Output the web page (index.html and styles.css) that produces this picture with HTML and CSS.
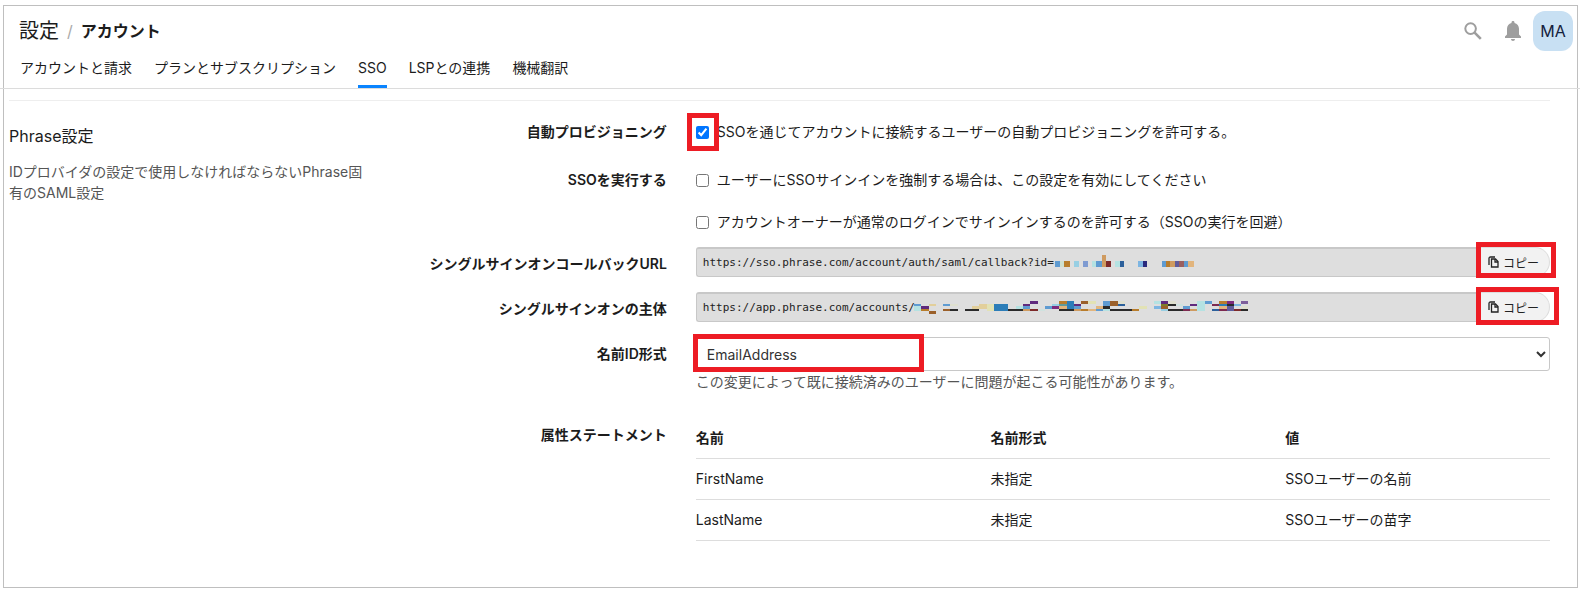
FILE: index.html
```
<!DOCTYPE html>
<html lang="ja">
<head>
  <meta charset="UTF-8" />
  <meta name="viewport" content="width=device-width, initial-scale=1.0" />
  <title>設定 / アカウント - SSO</title>
  <link rel="stylesheet" href="styles.css">
</head>
<body>
  <div class="frame">
    <header class="topbar">
      <h1 class="breadcrumb">
        <a href="#">設定</a>
        <span class="slash">/</span>
        <strong>アカウント</strong>
      </h1>
      <div class="tools">
        <button class="icon-btn" type="button" aria-label="検索">
          <svg width="18" height="18" viewBox="0 0 18 18" fill="none" stroke="#9e9e9e">
            <circle cx="6.6" cy="6.6" r="5.3" stroke-width="2" />
            <path d="M10.6 10.6L16.8 16.8" stroke-width="2.6" />
          </svg>
        </button>
        <button class="icon-btn" type="button" aria-label="通知">
          <svg width="16" height="20" viewBox="0 0 16 20" fill="#9e9e9e">
            <path d="M8 0c.9 0 1.5.6 1.5 1.4v.5C12.200 2.600 14 4.900 14 7.700V13.500l2 2V17H0v-1.500l2-2V7.700C2 4.900 3.800 2.600 6.500 1.900v-.5C6.500.6 7.100 0 8 0z" />
            <path d="M6 18h4c0 1.100-.9 2-2 2s-2-.9-2-2z" />
          </svg>
        </button>
        <button class="avatar" type="button">MA</button>
      </div>
    </header>

    <nav class="tabs">
      <a href="#">アカウントと請求</a>
      <a href="#">プランとサブスクリプション</a>
      <a href="#" class="active">SSO</a>
      <a href="#">LSPとの連携</a>
      <a href="#">機械翻訳</a>
    </nav>

    <main class="section">
      <div class="intro">
        <h2>Phrase設定</h2>
        <p>IDプロバイダの設定で使用しなければならないPhrase固有のSAML設定</p>
      </div>

      <form class="form">
        <div class="row">
          <label class="name" for="provision">自動プロビジョニング</label>
          <div class="field checks">
            <label class="check">
              <span class="marked">
                <input type="checkbox" id="provision" checked>
                <span class="mark mark-check"></span>
              </span>
              SSOを通じてアカウントに接続するユーザーの自動プロビジョニングを許可する。
            </label>
          </div>
        </div>

        <div class="row">
          <label class="name" for="enforce">SSOを実行する</label>
          <div class="field checks">
            <label class="check"><input type="checkbox" id="enforce">ユーザーにSSOサインインを強制する場合は、この設定を有効にしてください</label>
            <label class="check"><input type="checkbox">アカウントオーナーが通常のログインでサインインするのを許可する（SSOの実行を回避）</label>
          </div>
        </div>

        <div class="row row-input">
          <label class="name" for="callback">シングルサインオンコールバックURL</label>
          <div class="field copy-group">
            <input type="text" id="callback" readonly value="https://sso.phrase.com/account/auth/saml/callback?id=">
            <!-- 伏せた ID -->
            <svg class="mosaic mosaic-id" width="139" height="12" viewBox="165 60 417 36" shape-rendering="crispEdges">
              <path fill="#5f9bd1" d="M165 78h15v18h-15zM288 78h18v18h-18zM486 78h12v18h-12zM552 78h12v18h-12z" />
              <path fill="#cfe0cf" d="M180 78h12v18h-12z" />
              <path fill="#b87d2c" d="M192 78h18v18h-18zM498 78h12v18h-12z" />
              <path fill="#98cfe3" d="M222 78h15v18h-15z" />
              <path fill="#7f9bd1" d="M249 78h15v18h-15z" />
              <path fill="#b5e2e2" d="M276 78h12v18h-12zM345 78h15v18h-15z" />
              <path fill="#cf9b60" d="M306 60h12v36h-12zM510 78h15v18h-15z" />
              <path fill="#7d2a2a" d="M318 78h15v18h-15z" />
              <path fill="#2c609b" d="M360 78h12v18h-12z" />
              <path fill="#7db5e2" d="M414 78h15v18h-15z" />
              <path fill="#2a2a7d" d="M429 78h12v18h-12z" />
              <path fill="#605c9b" d="M525 78h12v18h-12z" />
              <path fill="#9b6060" d="M537 78h15v18h-15z" />
              <path fill="#e2b57d" d="M564 78h18v18h-18z" />
            </svg>
            <button class="copy" type="button">
              <svg width="11" height="12" viewBox="0 0 11 12" fill="none" stroke="#222">
                <path d="M1 9V2.500Q1 1 2.500 1H7" stroke-width="1.300" />
                <path d="M3.500 3h4L10 5.500V11H3.500z" stroke-width="1.300" />
                <path d="M7 3v3h3" stroke-width="1.300" />
              </svg>
              コピー
            </button>
            <span class="mark mark-copy"></span>
          </div>
        </div>

        <div class="row row-input">
          <label class="name" for="entity">シングルサインオンの主体</label>
          <div class="field copy-group">
            <input type="text" id="entity" readonly value="https://app.phrase.com/accounts/">
            <!-- 伏せたアカウント名 -->
            <svg class="mosaic mosaic-account" width="334" height="13" viewBox="-258 198 1002 39" shape-rendering="crispEdges">
              <path fill="#5f9bd1" d="M-258 207h21v6h-21zM-171 207h21v6h-21zM69 213h21v9h-21zM135 213h21v9h-21zM222 213h21v9h-21zM288 222h21v6h-21zM309 198h21v15h-21zM549 213h21v9h-21zM615 198h21v9h-21z" />
              <path fill="#b5e2e2" d="M-258 213h21v15h-21zM48 213h21v9h-21zM309 222h21v6h-21zM462 198h21v9h-21zM591 198h24v30h-24z" />
              <path fill="#98cfe3" d="M156 207h21v6h-21zM483 222h21v6h-21z" />
              <path fill="#7db5e2" d="M462 213h21v9h-21zM702 207h21v6h-21z" />
              <path fill="#2c7db8" d="M-18 207h42v21h-42zM201 198h21v24h-21zM657 207h24v6h-24z" />
              <path fill="#2c609b" d="M354 207h21v6h-21zM636 222h21v6h-21z" />
              <path fill="#602a7d" d="M-237 213h24v9h-24zM69 207h21v6h-21zM90 198h24v9h-24zM222 207h21v6h-21zM483 198h21v9h-21zM570 207h21v6h-21z" />
              <path fill="#7d2a7d" d="M156 213h21v9h-21zM681 198h21v9h-21z" />
              <path fill="#7d2a50" d="M549 222h21v6h-21zM636 207h21v6h-21zM657 222h24v6h-24z" />
              <path fill="#7d2a2a" d="M90 222h24v6h-24zM702 222h21v6h-21z" />
              <path fill="#605c9b" d="M681 213h21v15h-21z" />
              <path fill="#7d609b" d="M723 198h21v9h-21z" />
              <path fill="#b87d2c" d="M-237 222h24v6h-24zM177 198h24v9h-24zM243 222h21v6h-21zM396 222h21v6h-21zM657 198h24v9h-24z" />
              <path fill="#9b602a" d="M-213 228h21v9h-21zM-171 222h21v6h-21zM243 198h21v9h-21zM330 198h24v15h-24zM483 213h21v9h-21z" />
              <path fill="#7d7d2a" d="M483 207h21v6h-21z" />
              <path fill="#cf9b60" d="M69 222h21v6h-21zM222 222h21v6h-21zM570 222h21v6h-21z" />
              <path fill="#e2b57d" d="M177 213h24v9h-24zM264 222h24v6h-24zM288 213h21v9h-21zM657 213h24v9h-24z" />
              <path fill="#e2cf9b" d="M-213 207h21v6h-21zM-84 213h21v9h-21zM-63 207h24v15h-24z" />
              <path fill="#e2e2b5" d="M-39 207h21v21h-21zM264 198h24v9h-24zM417 213h24v9h-24z" />
              <path fill="#dfe0cf" d="M-150 207h24v6h-24zM354 198h21v9h-21zM504 198h24v9h-24zM723 213h21v9h-21z" />
              <path fill="#cfe2df" d="M114 222h21v6h-21zM528 207h21v6h-21z" />
              <path fill="#5f9b9b" d="M177 207h24v6h-24z" />
              <path fill="#2a2a2a" d="M-150 222h24v6h-24zM-105 222h42v6h-42zM24 222h45v6h-45zM177 222h45v6h-45zM309 213h21v9h-21zM330 222h66v6h-66zM504 207h24v6h-24zM504 222h45v6h-45zM681 207h21v6h-21zM723 222h21v6h-21z" />
            </svg>
            <button class="copy" type="button">
              <svg width="11" height="12" viewBox="0 0 11 12" fill="none" stroke="#222">
                <path d="M1 9V2.500Q1 1 2.500 1H7" stroke-width="1.300" />
                <path d="M3.500 3h4L10 5.500V11H3.500z" stroke-width="1.300" />
                <path d="M7 3v3h3" stroke-width="1.300" />
              </svg>
              コピー
            </button>
            <span class="mark mark-copy mark-copy-wide"></span>
          </div>
        </div>

        <div class="row row-input">
          <label class="name" for="nameid">名前ID形式</label>
          <div class="field">
            <select id="nameid">
              <option>EmailAddress</option>
              <option>Persistent</option>
            </select>
            <span class="mark mark-select"></span>
            <p class="help">この変更によって既に接続済みのユーザーに問題が起こる可能性があります。</p>
          </div>
        </div>

        <div class="row row-table">
          <span class="name">属性ステートメント</span>
          <div class="field">
            <table class="attributes">
              <thead>
                <tr><th>名前</th><th>名前形式</th><th class="value">値</th></tr>
              </thead>
              <tbody>
                <tr><td>FirstName</td><td>未指定</td><td>SSOユーザーの名前</td></tr>
                <tr><td>LastName</td><td>未指定</td><td>SSOユーザーの苗字</td></tr>
              </tbody>
            </table>
          </div>
        </div>
      </form>
    </main>
  </div>
</body>
</html>
```
FILE: styles.css
```
* {
  box-sizing: border-box;
}
body {
  margin: 0;
  padding: 5px 2px 8px 3px;
  overflow-x: hidden;
  font-family: Inter, 'Noto Sans CJK JP', sans-serif;
  font-size: 14px;
  line-height: 20px;
  color: #1c1c1c;
  background: #fff;
}
a {
  color: inherit;
  text-decoration: none;
}
h1, h2, p {
  margin: 0;
}
button, select {
  font-family: inherit;
  cursor: pointer;
}
.frame {
  border: 1px solid #bfbfbf;
}

/* header */
.topbar {
  display: flex;
  justify-content: space-between;
  align-items: center;
  height: 50px;
  padding: 0 4px 0 15px;
}
.breadcrumb {
  display: flex;
  align-items: center;
  gap: 8px;
  font-size: 20px;
  font-weight: 400;
}
.breadcrumb strong {
  font-size: 16px;
  font-weight: 700;
}
.slash {
  font-size: 16px;
  color: #aaa;
}
.tools {
  display: flex;
  align-items: center;
  gap: 12px;
}
.icon-btn {
  display: flex;
  align-items: center;
  justify-content: center;
  width: 28px;
  height: 28px;
  padding: 0;
  border: none;
  background: none;
}
.avatar {
  width: 40px;
  height: 40px;
  padding: 0;
  margin-left: -6px;
  border: none;
  border-radius: 12px;
  background: #c8e0f3;
  color: #14213d;
  font-size: 16px;
  font-weight: 400;
}
.tabs {
  display: flex;
  gap: 22px;
  margin: 0 -3px 0 -4px;
  padding: 0 20px;
  border-bottom: 1px solid #dcdcdc;
}
.tabs a {
  line-height: 24px;
  padding-bottom: 5px;
  border-bottom: 3px solid transparent;
}
.tabs .active {
  border-color: #0a84ff;
}

/* settings section */
.section {
  display: flex;
  margin: 11px 27px 0 5px;
  padding: 19px 0 46px;
  border-top: 1px solid #eee;
}
.intro {
  flex: 0 0 24%;
  padding-right: 8px;
}
.intro h2 {
  margin: 4px 0 13px;
  font-size: 16px;
  line-height: 24px;
  font-weight: 400;
}
.intro p {
  line-height: 21px;
  color: #555;
}
.form {
  flex: 1;
  min-width: 0;
}
.row {
  display: flex;
  gap: 29px;
  margin-bottom: 24px;
}
.name {
  flex: 0 0 288px;
  line-height: 24px;
  text-align: right;
  font-weight: 600;
}
.field {
  flex: 1;
  min-width: 0;
  position: relative;
}
.checks {
  display: flex;
  flex-direction: column;
  gap: 18px;
}
.check {
  display: flex;
  align-items: center;
  gap: 8px;
  line-height: 24px;
}
.check input {
  display: block;
  width: 13px;
  height: 13px;
  margin: 0;
  accent-color: #0075ff;
}
.row-input {
  margin: -11px 0 26px;
}
.row-input .name {
  height: 30px;
  line-height: 34px;
}
.copy-group {
  display: flex;
  height: 30px;
}
.copy-group input {
  flex: 1;
  min-width: 0;
  padding: 0 6px;
  border: 1px solid #c8c8c8;
  border-top-width: 2px;
  border-right: none;
  border-radius: 3px 0 0 3px;
  background: #dedede;
  color: #222;
  font-family: 'DejaVu Sans Mono', monospace;
  font-size: 11px;
}
.copy {
  display: flex;
  align-items: center;
  gap: 4px;
  width: 70px;
  padding: 0 8px;
  border: 1px solid #ddd;
  border-left: none;
  border-radius: 0 15px 15px 0;
  background: #f2f2f2;
  color: #222;
  font-size: 12px;
}
.mosaic {
  position: absolute;
}
.mosaic-id {
  left: 359px;
  top: 8px;
}
.mosaic-account {
  left: 218px;
  top: 9px;
}
select {
  display: block;
  width: 100%;
  height: 34px;
  padding: 0 2px 0 6px;
  border: 1px solid #c8c8c8;
  border-radius: 3px;
  background: #fff;
  color: #333;
  font-size: 14px;
}
.help {
  margin-top: 1px;
  color: #555;
}
.attributes {
  width: 100%;
  table-layout: fixed;
  border-collapse: collapse;
}
.attributes th,
.attributes td {
  padding: 10px 0;
  border-bottom: 1px solid #ddd;
  text-align: left;
}
.attributes th {
  font-weight: 600;
}
.attributes .value {
  width: 31%;
}
.row-table {
  margin: 0;
}
.row-table .name {
  line-height: 34px;
}

/* red highlights */
.marked {
  position: relative;
}
.mark {
  position: absolute;
  border: 5px solid #ed1c24;
  pointer-events: none;
}
.mark-check {
  inset: -13px -10px -12px -9px;
}
.mark-copy {
  top: -5px;
  right: -6px;
  width: 80px;
  height: 36px;
}
.mark-copy-wide {
  right: -9px;
  width: 83px;
  height: 38px;
}
.mark-select {
  top: -3px;
  left: -3px;
  width: 231px;
  height: 38px;
}
```
